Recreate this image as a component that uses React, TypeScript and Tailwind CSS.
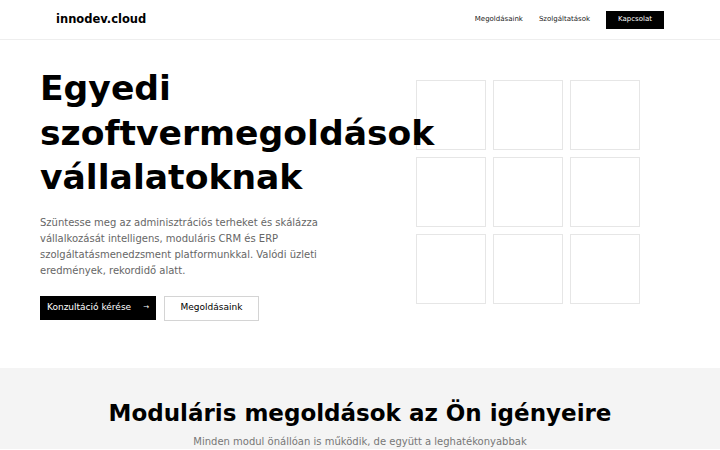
const font = { fontFamily: '"DejaVu Sans", sans-serif' };

function Header() {
  return (
    <header className="flex h-10 items-center justify-between border-b border-[#eeeeee] px-14">
      <div className="text-[11.5px] font-bold text-black">innodev.cloud</div>
      <nav className="flex items-center gap-4 text-[7px] text-[#222]">
        <a>Megoldásaink</a>
        <a>Szolgáltatások</a>
        <a className="flex h-[18px] w-[58px] items-center justify-center bg-black text-white">
          Kapcsolat
        </a>
      </nav>
    </header>
  );
}

function Hero() {
  return (
    <section className="flex items-start justify-between pb-[47px] pl-10 pr-20 pt-[26px]">
      <div className="relative z-10 w-[330px]">
        <h1 className="whitespace-nowrap text-[34.6px] font-bold leading-[44.5px] text-black">
          Egyedi
          <br />
          szoftvermegoldások
          <br />
          vállalatoknak
        </h1>
        <p className="mt-[15px] w-[285px] text-[10px] leading-[1.63] text-[#666]">
          Szüntesse meg az adminisztrációs terheket és skálázza vállalkozását
          intelligens, moduláris CRM és ERP szolgáltatásmenedzsment
          platformunkkal. Valódi üzleti eredmények, rekordidő alatt.
        </p>
        <div className="mt-[16px] flex gap-2 text-[9px]">
          <button className="flex h-6 w-[116px] items-center justify-center gap-3 bg-black text-white">
            Konzultáció kérése <span className="text-[7px]">→</span>
          </button>
          <button className="flex h-[25px] w-[95px] items-center justify-center border border-[#d4d4d4] bg-white text-black">
            Megoldásaink
          </button>
        </div>
      </div>
      <div className="mt-[14px] grid grid-cols-[repeat(3,70px)] gap-[7px]">
        {Array.from({ length: 9 }).map((_, i) => (
          <div key={i} className="h-[70px] border border-[#e6e6e6]" />
        ))}
      </div>
    </section>
  );
}

export default function App() {
  return (
    <div className="min-h-[450px] bg-white" style={font}>
      <Header />
      <Hero />
      <section className="bg-[#f4f4f4] pt-[28px] text-center">
        <h2 className="text-[23px] font-bold text-black">
          Moduláris megoldások az Ön igényeire
        </h2>
        <p className="mt-1 text-[10px] text-[#777]">
          Minden modul önállóan is működik, de együtt a leghatékonyabbak
        </p>
      </section>
    </div>
  );
}
